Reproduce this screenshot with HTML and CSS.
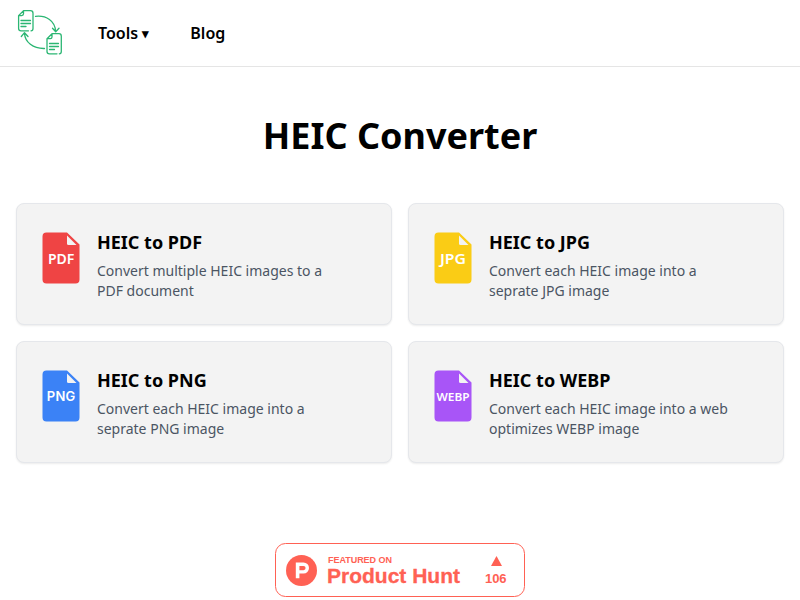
FILE: index.html
```html
<!DOCTYPE html>
<html lang="en">
<head>
<meta charset="utf-8">
<title>HEIC Converter</title>
<link rel="stylesheet" href="styles.css">
</head>
<body>
<svg class="defs" width="0" height="0" aria-hidden="true">
  <symbol id="file" viewBox="0 0 38 52">
    <path fill="currentColor" d="M4.500 .5H25L37.500 12.500V47.500A4 4 0 0 1 33.500 51.500H4.500A4 4 0 0 1 .5 47.500V4.500A4 4 0 0 1 4.500 .5Z"/>
    <path fill="#f3f3f3" d="M25 3.500V11.500Q25 13 26.500 13H34.500Z"/>
  </symbol>
</svg>
<header class="header">
  <a class="logo">
    <svg width="48" height="48" viewBox="0 0 48 48" fill="none" stroke="#2bb673" stroke-width="1.3" stroke-linecap="round" stroke-linejoin="round">
      <path d="M7.500 1.700H14.500Q17 1.700 17 4.200V19.500Q17 21.800 15 21.800M12.500 21.800H5Q2.600 21.800 2.600 19.500V6.600L7.500 1.700V4.800Q7.500 6.600 5.700 6.600H2.600M5 11.500H14.500M5 14.500H14.500M5 17.500H10"/>
      <path d="M36 24.700H43Q45.300 24.700 45.300 27.200V42.500Q45.300 44.800 43.300 44.800M41 44.800H33.500Q31 44.800 31 42.500V29.700L36 24.700V27.900Q36 29.700 34.200 29.700H31M33.500 34.500H42.500M33.500 37.500H42.500M33.500 40.500H38.500"/>
      <path d="M19.500 7.300C30 6 39.500 12 39.500 22.500M36.500 19.300L39.700 22.700L43 19.300M28.500 39.500C17 39.800 9 33 8.500 24.500M5.300 27.500L8.500 23.700L12 27.500"/>
    </svg>
  </a>
  <nav class="nav"><a class="tools">Tools <span class="caret">▾</span></a><a>Blog</a></nav>
</header>
<main>
  <h1 class="title">HEIC Converter</h1>
  <div class="grid">
    <a class="card">
      <svg class="icon red" viewBox="0 0 38 52"><use href="#file"/><text class="label" x="19.200" y="32.300" textLength="26.500" lengthAdjust="spacingAndGlyphs">PDF</text></svg>
      <div><h2>HEIC to PDF</h2><p>Convert multiple HEIC images to a PDF document</p></div>
    </a>
    <a class="card">
      <svg class="icon yellow" viewBox="0 0 38 52"><use href="#file"/><text class="label" x="19" y="32" textLength="26" lengthAdjust="spacingAndGlyphs">JPG</text></svg>
      <div><h2>HEIC to JPG</h2><p>Convert each HEIC image into a seprate JPG image</p></div>
    </a>
    <a class="card">
      <svg class="icon blue" viewBox="0 0 38 52"><use href="#file"/><text class="label png" x="19" y="31" textLength="28.500">PNG</text></svg>
      <div><h2>HEIC to PNG</h2><p>Convert each HEIC image into a seprate PNG image</p></div>
    </a>
    <a class="card">
      <svg class="icon purple" viewBox="0 0 38 52"><use href="#file"/><text class="label webp" x="19" y="31" textLength="33" lengthAdjust="spacingAndGlyphs">WEBP</text></svg>
      <div><h2>HEIC to WEBP</h2><p>Convert each HEIC image into a web optimizes WEBP image</p></div>
    </a>
  </div>
  <a class="badge">
    <svg width="250" height="54" viewBox="0 0 250 54">
      <rect x=".5" y=".5" width="249" height="53" rx="10" fill="#fff" stroke="#ff6154"/>
      <circle cx="26.500" cy="27.500" r="15.500" fill="#ff6154"/>
      <path fill="#fff" fill-rule="evenodd" d="M20.800 19.500H28.500A5.500 5.500 0 0 1 28.500 30.500H24.400V35.200H20.800ZM24.400 23V27.200H28.500A2.100 2.100 0 0 0 28.500 23Z"/>
      <g class="hunt">
        <text x="53" y="20" font-size="9" textLength="64">FEATURED ON</text>
        <text x="52" y="40" font-size="21" textLength="133" stroke="#ff6154" stroke-width=".3">Product Hunt</text>
        <path d="M221.500 13L227 23H216Z"/>
        <text x="210" y="40" font-size="13" textLength="21.500">106</text>
      </g>
    </svg>
  </a>
</main>
</body>
</html>
```

FILE: styles.css
```css
* { box-sizing: border-box; }
body, h1, h2, p { margin: 0; }
body {
  background: #fff;
  color: #000;
  font-family: "Noto Sans", sans-serif;
  font-size: 16px;
  line-height: 24px;
  overflow: hidden;
}
.defs { position: absolute; }
.header {
  display: flex;
  align-items: center;
  height: 67px;
  padding: 0 16px;
  border-bottom: 1px solid #e5e5e5;
}
.logo { display: flex; margin-top: -1px; }
.nav { display: flex; gap: 36px; margin-left: 34px; font-weight: 600; }
.caret { display: inline-block; font-size: 13px; line-height: 12px; vertical-align: 1px; width: 12px; }
.title {
  margin-top: 49px;
  font-size: 36px;
  line-height: 40px;
  font-weight: 700;
  text-align: center;
}
.grid {
  display: grid;
  grid-template-columns: 1fr 1fr;
  grid-auto-rows: 122px;
  gap: 16px;
  margin: 47px 16px 0;
}
.card {
  display: flex;
  gap: 17px;
  padding: 24px 48px 24px 25px;
  border: 1px solid #e5e7eb;
  border-radius: 8px;
  background: #f3f3f3;
  box-shadow: 0 1px 2px rgba(0, 0, 0, .08);
}
.icon { flex: none; width: 38px; height: 52px; margin-top: 4px; }
.card h2 { font-size: 18px; line-height: 28px; font-weight: 700; }
.card p { margin-top: 5px; font-size: 14px; line-height: 20px; color: #4b5563; }
.red { color: #ef4444; }
.yellow { color: #facc15; }
.blue { color: #3b82f6; }
.purple { color: #a855f7; }
.label { fill: #fff; font-size: 13.5px; font-weight: 600; text-anchor: middle; }
.png { font-family: Inter, sans-serif; font-size: 13px; }
.webp { font-size: 11.5px; font-weight: 600; }
.badge { display: block; width: 250px; height: 54px; margin: 80px auto 0; }
.badge svg { display: block; }
.hunt { fill: #ff6154; font-family: "Liberation Sans", sans-serif; font-weight: 700; }
```
